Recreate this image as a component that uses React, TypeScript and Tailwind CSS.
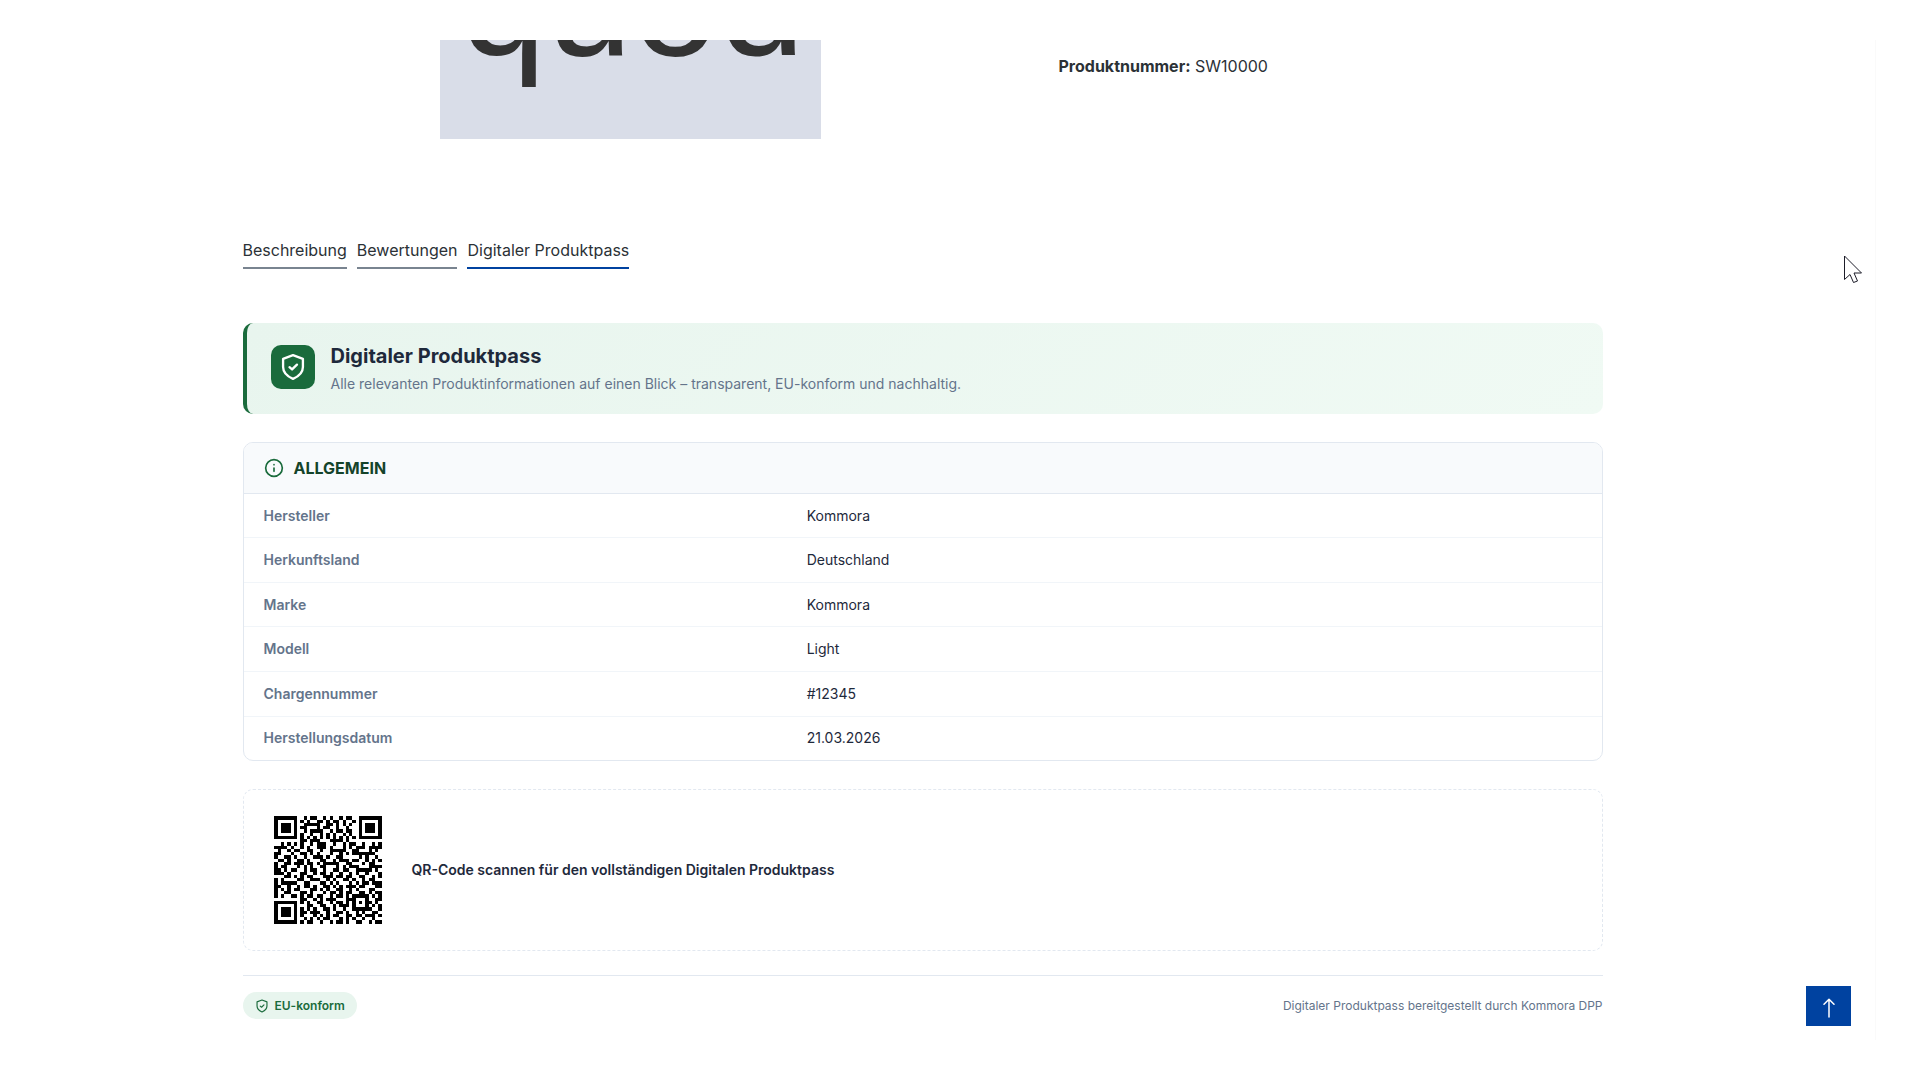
import { Info } from "lucide-react";

type Row = { label: string; value: string };

const tabs = ["Beschreibung", "Bewertungen", "Digitaler Produktpass"];

const general: Row[] = [
  { label: "Hersteller", value: "Kommora" },
  { label: "Herkunftsland", value: "Deutschland" },
  { label: "Marke", value: "Kommora" },
  { label: "Modell", value: "Light" },
  { label: "Chargennummer", value: "#12345" },
  { label: "Herstellungsdatum", value: "21.03.2026" },
];

const qrRows = [
  "#######..#.##..#.#..#.##..#######",
  "#.....#.#.#..##.#.##.#..#.#.....#",
  "#.###.#..#####..##.#.#.#..#.###.#",
  "#.###.#.##...#.##..#..#...#.###.#",
  "#.###.#..#.####..#.##.##..#.###.#",
  "#.....#.#..#..#.#.#..#.#..#.....#",
  "#######.#.#.#.#.#.#.#.#.#.#######",
  "........##.###...####.#..........",
  "..#.#.#.#..#.###..#..#.##..#..#.#",
  "####.#..#.#..###.#...#.#.###.####",
  ".#..#.##..##..#..#####..##...#.#.",
  "##...#..##.#.#...#..#.#.#######..",
  "#..##.#..#..###.#..##.....#.#..#.",
  ".##.#..##.#...##..#.###.##..#.#.#",
  "#..##.###.##.#.#####..##...#.##..",
  "#.##...#.#.#..##...#.#.###...####",
  "##.#.##..#.##..#..##.##..#####.#.",
  "###.#...##..#.##.#..#..#.#..#...#",
  "...##.#.#.##...###.##.##..##..#.#",
  "#.#....##..###..#.#..##.#..#.##..",
  "#.#####..##...##.#.#...#.#.##.###",
  "##..#..#.##.#..##.#.#.###.##...##",
  "#.#.#.##...##.#.#..##..#.#...##..",
  "#..##...##.#...#.##.#.##..##.#.##",
  "#.#..##.#.##.##..#.##.#.#####.#.#",
  "........##..#.#.###...###...#..##",
  "#######.#.#..##..#.##.#.#.#.##.#.",
  "#.....#...##..##..#.###.#...#.#.#",
  "#.###.#.#.#.#..##.#..#..######..#",
  "#.###.#.##.###..#..##.#..#.#..##.",
  "#.###.#.#...#.#.#.##..##.##.###.#",
  "#.....#..#.#.#.##...#.#.#..#..#..",
  "#######.#.##..#..#.##.#..##..#.##",
];

function QrCode() {
  return (
    <svg
      viewBox="0 0 37 37"
      className="size-[120px] shrink-0"
      shapeRendering="crispEdges"
      role="img"
    >
      {qrRows.map((row, y) =>
        row
          .split("")
          .map((cell, x) =>
            cell === "#" ? (
              <rect key={`${x}-${y}`} x={x + 2} y={y + 2} width="1" height="1" />
            ) : null
          )
      )}
    </svg>
  );
}

function ShieldIcon({ className }: { className: string }) {
  return (
    <svg
      viewBox="0 0 24 24"
      className={className}
      fill="none"
      stroke="currentColor"
      strokeWidth="2"
      strokeLinecap="round"
      strokeLinejoin="round"
    >
      <path d="M12 1.800 20.500 5v7c0 5-3.500 8-8.500 10.200C7 20 3.500 17 3.500 12V5Z" />
      <path d="m9 12.200 2.200 1.900 4.200-4.100" />
    </svg>
  );
}

function ProductHead() {
  return (
    <section className="grid grid-cols-[776px_1fr] gap-10">
      <div className="flex justify-center">
        <div className="flex h-[99px] w-[381px] items-end justify-center overflow-hidden bg-[#d9dde8] pl-1 font-['Liberation_Sans',sans-serif] text-[155px] leading-[275px] text-[#333]">
          quod
        </div>
      </div>
      <p className="pt-[14px] text-base text-[#2b3136]">
        <strong className="font-bold">Produktnummer:</strong> SW10000
      </p>
    </section>
  );
}

function Tabs() {
  return (
    <nav className="mt-[95px] flex gap-[10px]">
      {tabs.map((tab, i) => (
        <button
          key={tab}
          type="button"
          className={`border-b-2 pt-1 pb-[5px] text-base text-[#2b3136] ${
            i === 2 ? "border-[#0042a0]" : "border-[#798490]"
          }`}
        >
          {tab}
        </button>
      ))}
    </nav>
  );
}

function Banner() {
  return (
    <header className="mt-[54px] flex items-start gap-4 rounded-[10px] border-l-4 border-[#1a6b3c] bg-linear-135 from-[#e8f5ee] to-[#f0faf4] px-6 py-[18px]">
      <div className="mt-1 flex size-11 shrink-0 items-center justify-center rounded-[10px] bg-[#1a6b3c] text-white">
        <ShieldIcon className="size-7" />
      </div>
      <div>
        <h2 className="text-xl leading-[30px] font-bold text-[#1e293b]">
          Digitaler Produktpass
        </h2>
        <p className="text-sm leading-[25px] text-[#64748b]">
          Alle relevanten Produktinformationen auf einen Blick – transparent,
          EU-konform und nachhaltig.
        </p>
      </div>
    </header>
  );
}

function GeneralCard() {
  return (
    <section className="mt-7 overflow-hidden rounded-[10px] border border-[#e2e8f0]">
      <h3 className="flex h-[51px] items-center gap-[10px] border-b border-[#e2e8f0] bg-[#f8fafc] px-5 text-base font-bold text-[#14432a]">
        <Info className="size-5 text-[#1a6b3c]" strokeWidth={2} />
        ALLGEMEIN
      </h3>
      <table className="h-[266px] w-full table-fixed text-left text-sm">
        <tbody>
          {general.map((row) => (
            <tr
              key={row.label}
              className="border-b border-[#f1f5f9] last:border-b-0"
            >
              <th className="w-2/5 px-5 font-semibold text-[#64748b]">
                {row.label}
              </th>
              <td className="px-5 text-[#1e293b]">{row.value}</td>
            </tr>
          ))}
        </tbody>
      </table>
    </section>
  );
}

export default function App() {
  return (
    <div className="min-h-screen bg-white py-10 pr-11 font-[Inter,sans-serif]">
      <div className="min-h-[1000px] border-r border-[#fafafa] pr-[30px]">
        <main className="mx-auto max-w-[1360px]">
          <ProductHead />
          <Tabs />
          <Banner />
          <GeneralCard />
          <section className="mt-7 flex items-center gap-6 rounded-[10px] border border-dashed border-[#e2e8f0] px-6 py-5">
            <QrCode />
            <p className="text-sm font-semibold text-[#1e293b]">
              QR-Code scannen für den vollständigen Digitalen Produktpass
            </p>
          </section>
          <footer className="mt-6 flex items-center justify-between border-t border-[#e2e8f0] pt-4 text-xs text-[#64748b]">
            <span className="flex items-center gap-[6px] rounded-full bg-[#e8f5ee] px-3 py-[5px] leading-[17px] font-semibold text-[#1a6b3c]">
              <ShieldIcon className="size-[14px]" />
              EU-konform
            </span>
            <span>Digitaler Produktpass bereitgestellt durch Kommora DPP</span>
          </footer>
        </main>
      </div>

      <button
        type="button"
        aria-label="Nach oben"
        className="fixed right-[69px] bottom-[54px] flex h-10 w-[45px] items-center justify-center bg-[#0042a0] pt-1 text-white"
      >
        <svg
          viewBox="0 0 12 20"
          className="h-5 w-3"
          fill="none"
          stroke="currentColor"
          strokeWidth="1.5"
          strokeLinecap="round"
          strokeLinejoin="round"
        >
          <path d="M6 19V1.200M1 6.200l5-5 5 5" />
        </svg>
      </button>

      <svg
        viewBox="0 0 18 28"
        className="absolute top-[255px] right-[58px] h-7 w-[18px]"
        fill="#fff"
        stroke="#1c1c28"
        strokeWidth="1"
      >
        <path d="M.5 1v23.500l5.500-5 3.500 8 4-1.500-3.500-8h7.500Z" />
      </svg>
    </div>
  );
}
